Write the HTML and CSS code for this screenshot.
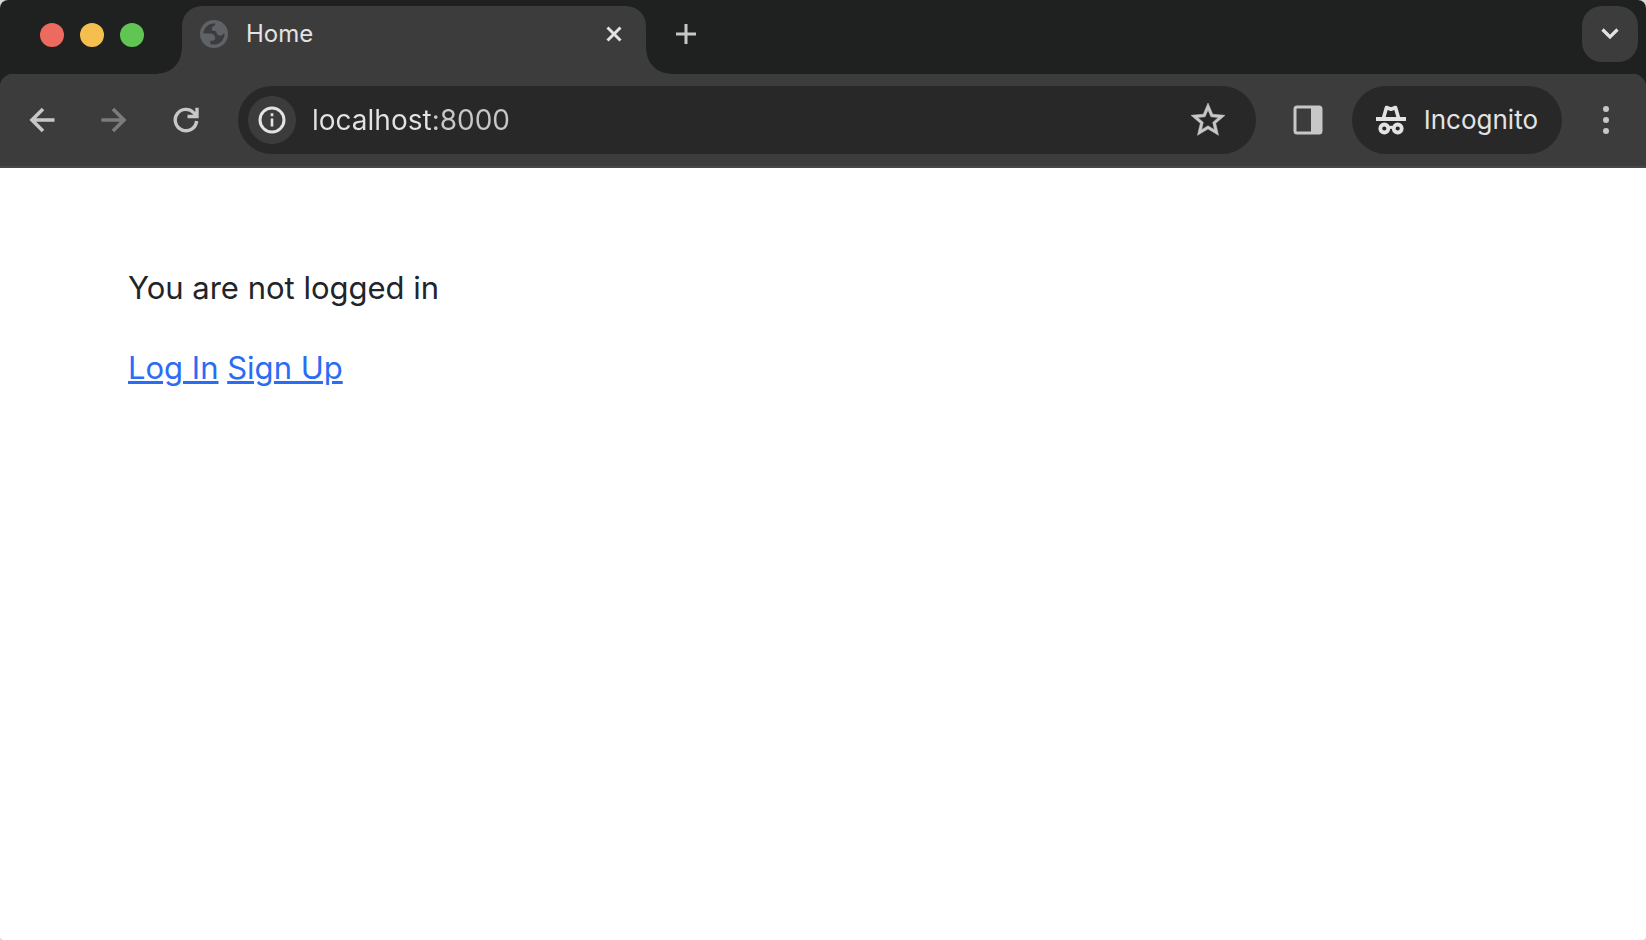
FILE: index.html
```html
<!DOCTYPE html>
<html lang="en">
<head>
    <meta charset="UTF-8">
    <meta name="viewport" content="width=device-width, initial-scale=1.0">
    <title>Home</title>
    <link rel="stylesheet" href="styles.css">
</head>
<body>
    <div class="browser">
        <header class="tab-strip">
            <div class="window-controls">
                <button class="light light-close" aria-label="Close window"></button>
                <button class="light light-minimize" aria-label="Minimize window"></button>
                <button class="light light-zoom" aria-label="Zoom window"></button>
            </div>
            <div class="tab">
                <svg class="tab-icon" viewBox="0 0 28 28" width="28" height="28" aria-hidden="true">
                    <circle cx="14" cy="14" r="14" fill="#5f6368"/>
                    <path d="M3.400 13.500C3.600 8 8 3.500 14 3.400h1.500c-.3 1.600-1 2.300-2 2.800-1.200.6-1.700 1.300-1.700 2.600 0 1.500 1 2.200 2.400 2.200h1.600c.5 0 .7.400.7 1 0 2.200 1.400 3.500 3.600 3.500 1.800 0 2.800-.8 3.300-2.100h1.200c0 6.200-4.700 11.100-10.600 11.200-1.400 0-2.700-.2-3.700-.6v-3.300h2.500c1.500 0 2.400-.8 2.400-2.200 0-3-1.900-5-5-5z" fill="#3c3c3c"/>
                </svg>
                <span class="tab-title">Home</span>
                <button class="icon-button tab-close" aria-label="Close tab">
                    <svg viewBox="0 0 16 16" width="16" height="16"><path d="M1.500 1.500l13 13M14.500 1.500l-13 13" stroke="#e3e3e3" stroke-width="3"/></svg>
                </button>
            </div>
            <button class="icon-button new-tab" aria-label="New tab">
                <svg viewBox="0 0 20 20" width="20" height="20"><path d="M0 10h20M10 0v20" stroke="#c7c7c7" stroke-width="3"/></svg>
            </button>
            <button class="icon-button tab-search" aria-label="Search tabs">
                <svg viewBox="0 0 18 12" width="18" height="12"><path d="M1.500 1.500L9 9l7.500-7.500" fill="none" stroke="#e3e3e3" stroke-width="3.200"/></svg>
            </button>
        </header>

        <nav class="toolbar" aria-label="Browser toolbar">
            <div class="nav-buttons">
                <button class="icon-button" aria-label="Back">
                    <svg viewBox="0 0 28 28" width="28" height="28"><path d="M26.500 14H4M15 3L4 14l11 11" fill="none" stroke="#c7c7c7" stroke-width="3.600"/></svg>
                </button>
                <button class="icon-button" aria-label="Forward" disabled>
                    <svg viewBox="0 0 28 28" width="28" height="28"><path d="M1.500 14H24M13 3l11 11-11 11" fill="none" stroke="#7c7c7c" stroke-width="3.600"/></svg>
                </button>
                <button class="icon-button" aria-label="Reload">
                    <svg viewBox="0 0 28 28" width="28" height="28"><path d="M24.600 15A10.700 10.700 0 1 1 22 7l2 2.500M25 1.700v8.800H15.500" fill="none" stroke="#c7c7c7" stroke-width="3.400"/></svg>
                </button>
            </div>
            <div class="omnibox">
                <button class="site-info" aria-label="View site information">
                    <svg viewBox="0 0 28 28" width="28" height="28"><circle cx="14" cy="14" r="12" fill="none" stroke="#e3e3e3" stroke-width="3"/><path d="M14 12.500v8M14 7.300v3" stroke="#e3e3e3" stroke-width="2.600"/></svg>
                </button>
                <input class="address" type="text" value="localhost:8000" aria-label="Address" spellcheck="false">
                <button class="icon-button" aria-label="Bookmark this tab">
                    <svg viewBox="2 2 20 20" width="34" height="34"><path d="M22 9.240l-7.190-.62L12 2 9.190 8.630 2 9.240l5.460 4.730L5.820 21 12 17.270 18.180 21l-1.630-7.030L22 9.240zM12 15.400l-3.760 2.270 1-4.280-3.320-2.880 4.380-.38L12 6.100l1.710 4.040 4.380.38-3.320 2.880 1 4.280L12 15.400z" fill="#c7c7c7" stroke="#c7c7c7" stroke-width=".3"/></svg>
                </button>
            </div>
            <button class="icon-button side-panel" aria-label="Side panel">
                <svg viewBox="0 0 30 30" width="30" height="30"><rect x="2" y="2" width="26" height="26" rx="2" fill="none" stroke="#c7c7c7" stroke-width="3"/><path d="M18 2h10v26H18z" fill="#c7c7c7"/></svg>
            </button>
            <button class="incognito">
                <svg viewBox="0 0 30 30" width="30" height="30" aria-hidden="true">
                    <path d="M0 12h30v4H0z" fill="#e3e3e3"/>
                    <path d="M7.500 13L10.500 2.500l4.500 1.700 4.500-1.700 3 10.500" fill="none" stroke="#e3e3e3" stroke-width="3.600" stroke-linejoin="round"/>
                    <g fill="none" stroke="#e3e3e3" stroke-width="3.800"><circle cx="8.300" cy="23.500" r="4"/><circle cx="21.700" cy="23.500" r="4"/><path d="M12 23q3-1.500 6 0" stroke-width="3"/></g>
                </svg>
                <span>Incognito</span>
            </button>
            <button class="icon-button menu" aria-label="Menu">
                <svg viewBox="0 0 6 28" width="6" height="28" fill="#c7c7c7"><circle cx="3" cy="3" r="3"/><circle cx="3" cy="14" r="3"/><circle cx="3" cy="25" r="3"/></svg>
            </button>
        </nav>

        <main class="page">
            <p>You are not logged in</p>
            <p><a href="#login">Log In</a> <a href="#signup">Sign Up</a></p>
        </main>
    </div>
</body>
</html>
```
FILE: styles.css
```css
:root {
    --strip-color: #1f2120;
    --toolbar-color: #3c3c3c;
    --field-color: #282828;
    --line-color: #474747;
    --text-light: #e3e3e3;
    --text-muted: #c7c7c7;
    --text-color: #212529;
    --link-color: #2b6cf6;
}

* {
    margin: 0;
    padding: 0;
    box-sizing: border-box;
    font-family: Inter, "Liberation Sans", sans-serif;
}

body {
    background-color: #d8d8d8;
}

.browser {
    min-height: 100vh;
    display: flex;
    flex-direction: column;
    background-color: white;
    border-radius: 8px 8px 4px 4px;
    overflow: hidden;
}

button {
    border: none;
    background: none;
    color: inherit;
}

svg {
    display: block;
}

.icon-button {
    display: flex;
    align-items: center;
    justify-content: center;
    flex-shrink: 0;
}

/* Tab strip */
.tab-strip {
    height: 74px;
    display: flex;
    background-color: var(--strip-color);
    color: var(--text-light);
}

.window-controls {
    width: 182px;
    padding: 23px 0 0 40px;
    display: flex;
    gap: 16px;
}

.light {
    width: 24px;
    height: 24px;
    border-radius: 50%;
}

.light-close {
    background-color: #ed6a5e;
}

.light-minimize {
    background-color: #f5bf4f;
}

.light-zoom {
    background-color: #61c554;
}

.tab {
    position: relative;
    width: 464px;
    margin-top: 6px;
    padding: 0 24px 12px 18px;
    display: flex;
    align-items: center;
    background-color: var(--toolbar-color);
    border-radius: 20px 20px 0 0;
}

/* Curved feet where the tab meets the toolbar */
.tab::before,
.tab::after {
    content: "";
    position: absolute;
    bottom: 0;
    width: 24px;
    height: 24px;
}

.tab::before {
    right: 100%;
    background: radial-gradient(circle at 0 0, transparent 23px, var(--toolbar-color) 24px);
}

.tab::after {
    left: 100%;
    background: radial-gradient(circle at 100% 0, transparent 23px, var(--toolbar-color) 24px);
}

.tab-title {
    flex: 1;
    margin-left: 18px;
    font-size: 24px;
    line-height: 28px;
}

.new-tab {
    width: 56px;
    height: 56px;
    margin: 6px 0 0 12px;
}

.tab-search {
    width: 56px;
    height: 56px;
    margin: 6px 8px 0 auto;
    background-color: var(--toolbar-color);
    border-radius: 20px;
}

/* Toolbar */
.toolbar {
    height: 94px;
    padding: 0 12px 0 28px;
    display: flex;
    align-items: center;
    background:
        radial-gradient(circle at 14px 14px, var(--toolbar-color) 14px, var(--strip-color) 15px) 0 0 / 14px 14px no-repeat,
        radial-gradient(circle at 0 14px, var(--toolbar-color) 14px, var(--strip-color) 15px) 100% 0 / 14px 14px no-repeat,
        var(--toolbar-color);
    border-bottom: 2px solid var(--line-color);
}

.nav-buttons {
    display: flex;
    gap: 44px;
    margin-right: 38px;
}

.omnibox {
    flex: 1;
    height: 68px;
    padding: 0 31px 0 10px;
    display: flex;
    align-items: center;
    background-color: var(--field-color);
    border-radius: 34px;
}

.site-info {
    width: 48px;
    height: 48px;
    flex-shrink: 0;
    display: flex;
    align-items: center;
    justify-content: center;
    background-color: var(--toolbar-color);
    border-radius: 50%;
}

/* Host is brighter than the port */
.address {
    flex: 1;
    min-width: 0;
    margin-left: 16px;
    border: none;
    outline: none;
    font-size: 28px;
    line-height: 36px;
    color: transparent;
    caret-color: var(--text-light);
    background: linear-gradient(to right, var(--text-light) 120px, var(--text-muted) 120px);
    -webkit-background-clip: text;
    background-clip: text;
}

.side-panel {
    margin: 0 29px 0 37px;
}

.incognito {
    height: 68px;
    padding: 0 24px;
    display: flex;
    align-items: center;
    gap: 18px;
    background-color: var(--field-color);
    border-radius: 34px;
    color: var(--text-light);
    font-size: 26px;
    line-height: 36px;
}

.menu {
    width: 56px;
    height: 56px;
    margin-left: 16px;
}

/* Page content */
.page {
    flex: 1;
    padding: 96px 128px;
    color: var(--text-color);
    font-size: 31px;
    line-height: 48px;
}

.page p {
    margin-bottom: 32px;
}

.page a {
    color: var(--link-color);
    text-decoration-thickness: 3px;
}
```
